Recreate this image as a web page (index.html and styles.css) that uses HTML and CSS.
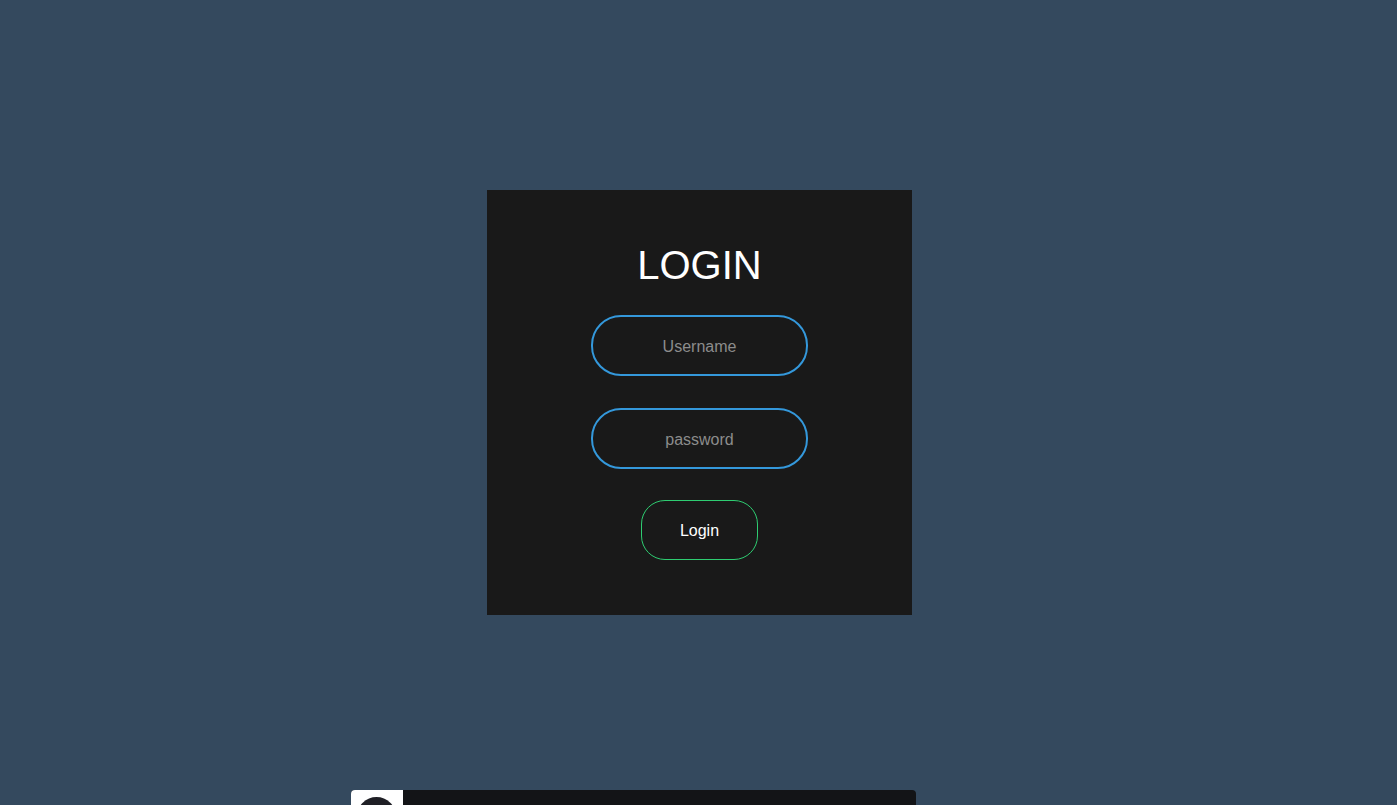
FILE: index.html
```html
<!DOCTYPE html>
<html lang="en">
<head>
<meta charset="utf-8">
<title>Login</title>
<link rel="stylesheet" href="styles.css">
</head>
<body>
<main class="stage">
  <form class="box" onsubmit="return false;">
    <h1 class="title">Login</h1>
    <input class="field" type="text" placeholder="Username">
    <input class="field" type="password" placeholder="password">
    <input class="submit" type="submit" value="Login">
  </form>
</main>
<div class="widget">
  <div class="widget-avatar"><span class="avatar-circle"></span></div>
  <div class="widget-body"></div>
</div>
</body>
</html>
```
FILE: styles.css
```css
html, body {
  margin: 0;
  padding: 0;
}
body {
  background: #34495e;
  font-family: "Liberation Sans", Arial, sans-serif;
  overflow: hidden;
  height: 805px;
  position: relative;
}
.stage {
  height: 805px;
  display: flex;
  align-items: center;
  justify-content: center;
}
.box {
  width: 425px;
  height: 425px;
  box-sizing: border-box;
  background: #191919;
  display: flex;
  flex-direction: column;
  align-items: center;
  padding-top: 52px;
  margin-left: 2px;
}
.title {
  margin: 0;
  color: #fff;
  font-size: 40px;
  font-weight: 400;
  line-height: 46px;
  text-transform: uppercase;
}
.field {
  box-sizing: border-box;
  width: 217px;
  height: 61px;
  margin-top: 27px;
  border: 2px solid #3498db;
  border-radius: 30px;
  background: none;
  text-align: center;
  color: #fff;
  font-family: "Liberation Sans", Arial, sans-serif;
  font-size: 16px;
  outline: none;
  padding: 3px 10px 0;
}
.field + .field {
  margin-top: 32px;
}
.field::placeholder {
  color: #8c8c8c;
}
.submit {
  box-sizing: border-box;
  width: 117px;
  height: 60px;
  margin-top: 31px;
  border: 1px solid #2ecc71;
  border-radius: 24px;
  background: none;
  color: #fff;
  font-family: "Liberation Sans", Arial, sans-serif;
  font-size: 16px;
  padding: 1px 0 0;
  cursor: pointer;
}
.widget {
  position: absolute;
  left: 351px;
  top: 790px;
  width: 565px;
  height: 15px;
  display: flex;
  border-radius: 4px 4px 0 0;
  overflow: hidden;
  background: #131417;
}
.widget-avatar {
  width: 52px;
  background: #fff;
  padding: 7px 0 0 6px;
  box-sizing: border-box;
  overflow: hidden;
}
.avatar-circle {
  display: block;
  width: 39px;
  height: 39px;
  border-radius: 50%;
  background: #1f1f25;
}
.widget-body {
  flex: 1;
}
```
